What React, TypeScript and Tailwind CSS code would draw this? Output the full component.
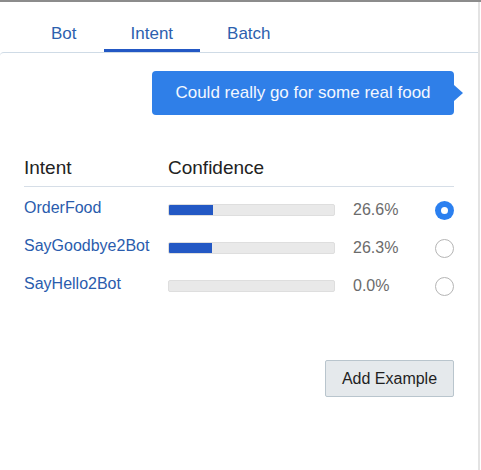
import { useState } from "react";

type IntentRow = { name: string; score: number };

const intents: IntentRow[] = [
  { name: "OrderFood", score: 0.266 },
  { name: "SayGoodbye2Bot", score: 0.263 },
  { name: "SayHello2Bot", score: 0 },
];

const tabs = ["Bot", "Intent", "Batch"];

export default function App() {
  const [active, setActive] = useState("Intent");
  const [picked, setPicked] = useState("OrderFood");

  return (
    <div
      className="h-[470px] w-[481px] overflow-hidden border-t-2 border-[#8c8c8c] bg-white"
      style={{ fontFamily: '"Liberation Sans", Arial, sans-serif' }}
    >
      <div className="h-full w-[480px] border-r-2 border-[#e3e3e3]">
        {/* Tabs */}
        <ul className="flex h-[50px] pl-[24px]">
          {tabs.map((tab) => (
            <li key={tab}>
              <button
                onClick={() => setActive(tab)}
                className={
                  "box-border h-[50px] px-[27px] pt-[16px] text-[17px] leading-[20px] text-[#2d5fae] " +
                  (active === tab
                    ? "border-b-[3px] border-[#2358c4]"
                    : "border-b-[3px] border-transparent")
                }
              >
                <span className="block">{tab}</span>
              </button>
            </li>
          ))}
        </ul>

        {/* Panel */}
        <div className="rounded-tl-[4px] border-t border-[#cfdbe6] px-[24px] pt-[18px]">
          <div className="flex justify-end">
            <div className="relative flex h-[44px] w-[302px] items-center justify-center rounded-[4px] bg-[#2f7fe8] text-[17px] text-[#f3f7ff]">
              Could really go for some real food
              <span className="absolute right-[-9px] top-[14px] h-0 w-0 border-y-[8px] border-l-[9px] border-y-transparent border-l-[#2f7fe8]" />
            </div>
          </div>

          {/* Results */}
          <div className="mt-[41px] flex h-[31px] border-b border-[#d6dee7] text-[19px] leading-[24px] text-[#222]">
            <span className="w-[144px]">Intent</span>
            <span>Confidence</span>
          </div>

          <ul className="mt-[4px]">
            {intents.map((it) => {
              const pct = Math.round(it.score * 1000) / 10;
              const on = picked === it.name;
              return (
                <li key={it.name} className="flex h-[38px] items-center">
                  <span className="mb-[4px] w-[144px] text-[16px] leading-[20px] text-[#2a5cad]">
                    {it.name}
                  </span>
                  <div className="h-[12px] w-[167px] overflow-hidden rounded-[2px] border border-[#dedede] bg-[#e9e9e9]">
                    <div
                      className="h-full bg-[#2358c4]"
                      style={{ width: `${it.score * 100}%` }}
                    />
                  </div>
                  <span className="ml-[18px] flex-1 text-[16px] leading-[20px] text-[#6b6b6b]">
                    {pct.toFixed(1)}%
                  </span>
                  <button
                    onClick={() => setPicked(it.name)}
                    className={
                      "flex h-[19px] w-[19px] items-center justify-center rounded-full " +
                      (on
                        ? "bg-[#2b80f0]"
                        : "border-[1.5px] border-[#b5b5b5] bg-white")
                    }
                  >
                    {on && <span className="h-[7px] w-[7px] rounded-full bg-white" />}
                  </button>
                </li>
              );
            })}
          </ul>

          <div className="mt-[55px] flex justify-end">
            <button className="h-[37px] w-[129px] rounded-[2px] border border-[#b9c5cd] bg-[#e5e9ec] text-[16px] text-[#1f1f1f]">
              Add Example
            </button>
          </div>
        </div>
      </div>
    </div>
  );
}
